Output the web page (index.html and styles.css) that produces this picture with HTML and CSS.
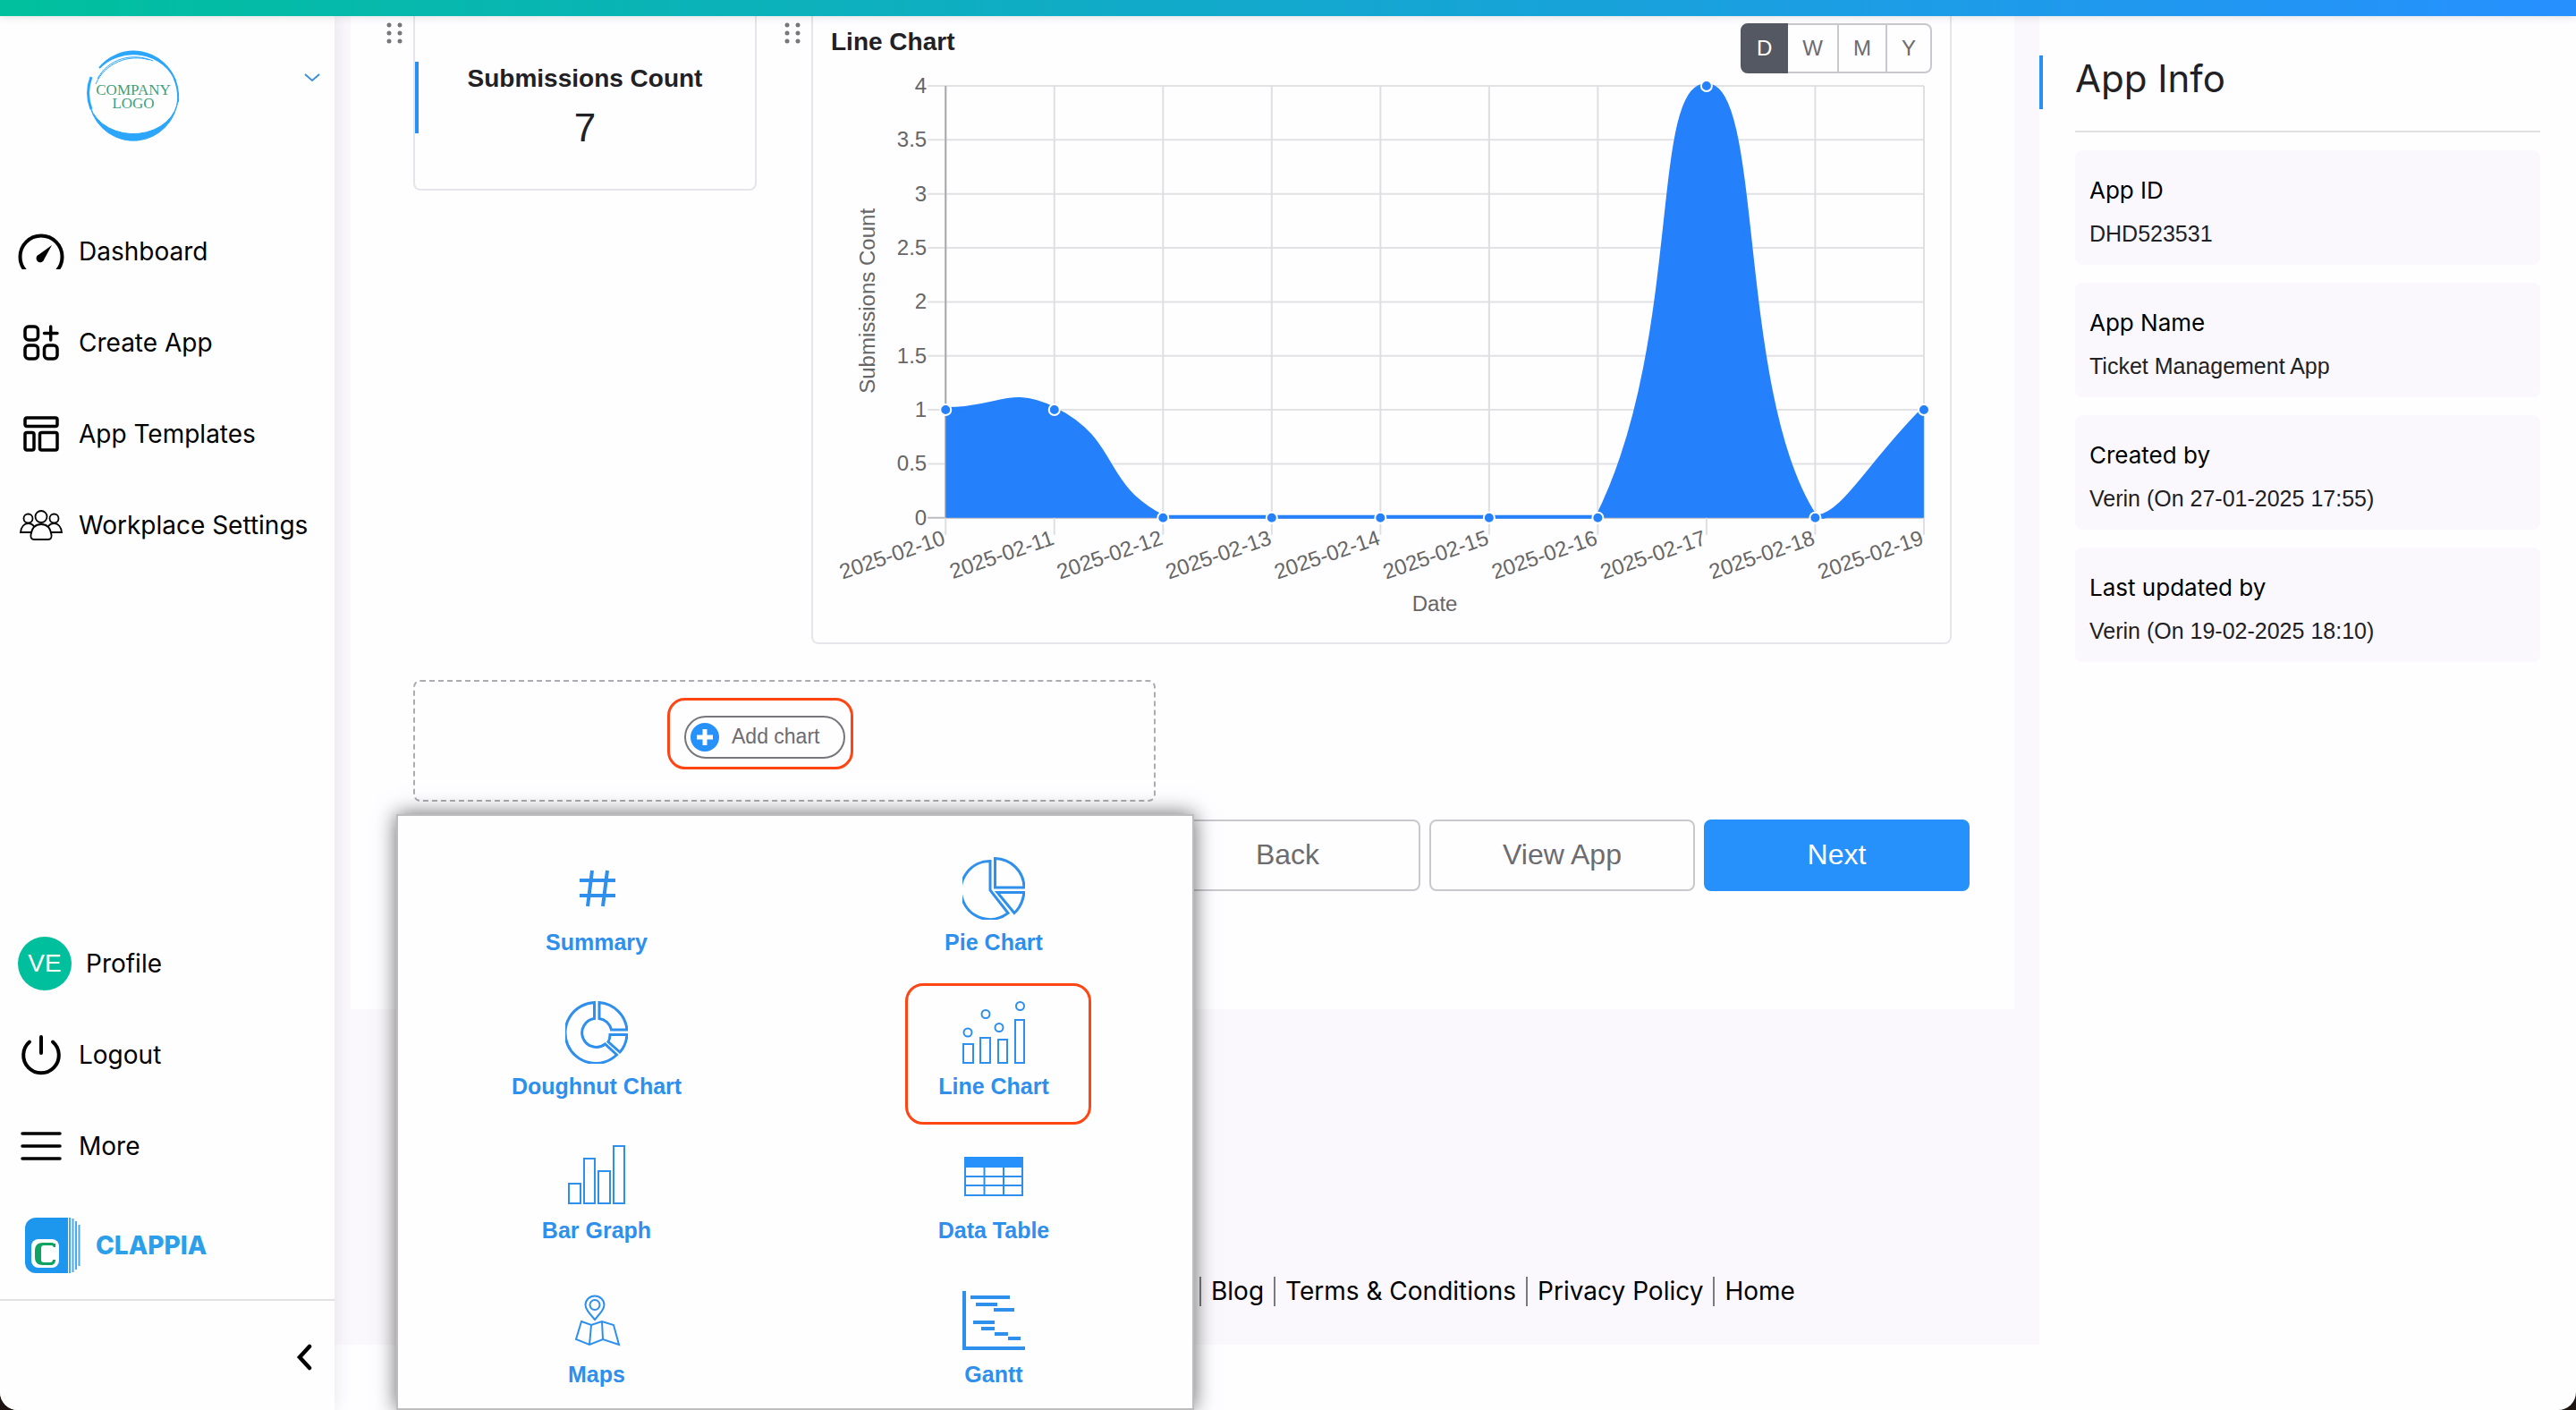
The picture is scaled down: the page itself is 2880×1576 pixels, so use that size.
FILE: index.html
```html
<!DOCTYPE html>
<html lang="en">
<head>
    <meta charset="UTF-8">
    <meta name="viewport" content="width=device-width, initial-scale=1.0">
    <title>Ticket Management App</title>
    <link rel="stylesheet" href="styles.css">
</head>
<body>
<div class="page">
    <header class="topbar"></header>

    <div class="layout">
        <aside class="sidebar">
            <div class="workplace">
                <svg class="company-logo" viewBox="0 0 104 104" fill="none" stroke="#2ba6fb">
                    <path d="M4 66A50 51 0 0 0 102 56A50 41 0 0 1 4 66Z" fill="#2ba6fb" stroke-width="1"/>
                    <path d="M14 22A50 51 0 0 1 99 36A50 45 0 0 0 14 22Z" fill="#2ba6fb" stroke-width="2"/>
                    <path d="M5 32A50 50 0 0 0 5 68" stroke-width="3"/>
                    <path d="M98 34q5 12 4 26" stroke-width="2"/>
                    <path d="M12 34C24 12 50 4 74 14M10 40C20 16 48 6 70 13" stroke-width="1"/>
                    <text class="logo-text" x="52" y="52" text-anchor="middle">COMPANY</text>
                    <text class="logo-text" x="52" y="67" text-anchor="middle">LOGO</text>
                </svg>
                <button class="icon-button" aria-label="Switch workplace">
                    <svg width="18" height="12" viewBox="0 0 18 12" fill="none" stroke="#3d8fd8" stroke-width="2"><path d="M1 2l8 7 8-7"/></svg>
                </button>
            </div>

            <nav class="menu">
                <a class="menu-item" href="#">
                    <span class="menu-icon">
                        <svg width="52" height="40" viewBox="0 0 52 40"><circle cx="26" cy="26" r="23.500" fill="none" stroke="#000" stroke-width="4"/><path d="M38 13L29.500 28.500a4.500 4.500 0 1 1-6-5Z"/></svg>
                    </span>
                    Dashboard
                </a>
                <a class="menu-item" href="#">
                    <span class="menu-icon">
                        <svg width="40" height="40" viewBox="0 0 40 40" fill="none" stroke="#000" stroke-width="3.500"><rect x="2" y="2" width="14.500" height="15" rx="4"/><rect x="2" y="23" width="14.500" height="15" rx="4"/><rect x="23.500" y="23" width="14.500" height="15" rx="4"/><path d="M30.700 2v15M23.500 9.500h14.500" stroke-linecap="round"/></svg>
                    </span>
                    Create App
                </a>
                <a class="menu-item" href="#">
                    <span class="menu-icon">
                        <svg width="40" height="40" viewBox="0 0 40 40" fill="none" stroke="#000" stroke-width="3.500"><rect x="2" y="2" width="36" height="9.500" rx="2"/><rect x="2" y="18.500" width="10" height="19.500" rx="2"/><rect x="18.500" y="18.500" width="19.500" height="19.500" rx="2"/></svg>
                    </span>
                    App Templates
                </a>
                <a class="menu-item" href="#">
                    <span class="menu-icon">
                        <svg width="48" height="34" viewBox="0 0 48 34" fill="none" stroke="#000" stroke-width="1.800"><circle cx="24" cy="7.500" r="6.500"/><circle cx="9.500" cy="9.500" r="5"/><circle cx="38.500" cy="9.500" r="5"/><path d="M16 33c-2.500 0-4-2-3.500-5 1-8 5.500-12 11.500-12s10.500 4 11.500 12c.5 3-1 5-3.500 5ZM12.500 25H1c.5-6 4-10 8.500-10 2.500 0 5 1 6.500 3.500M35.500 25H47c-.5-6-4-10-8.500-10-2.500 0-5 1-6.500 3.500"/></svg>
                    </span>
                    Workplace Settings
                </a>
            </nav>

            <nav class="menu menu-bottom">
                <a class="menu-item" href="#"><span class="avatar">VE</span>Profile</a>
                <a class="menu-item" href="#">
                    <span class="menu-icon">
                        <svg width="46" height="46" viewBox="0 0 46 46" fill="none" stroke="#000" stroke-width="4" stroke-linecap="round"><path d="M23 3v18M10 8.500a19.800 19.800 0 1 0 26 0"/></svg>
                    </span>
                    Logout
                </a>
                <a class="menu-item" href="#">
                    <span class="menu-icon">
                        <svg width="46" height="34" viewBox="0 0 46 34" stroke="#000" stroke-width="3.500" stroke-linecap="round"><path d="M2 3h42M2 17h42M2 31h42"/></svg>
                    </span>
                    More
                </a>
            </nav>

            <a class="brand" href="#">
                <svg width="62" height="62" viewBox="0 0 62 62">
                    <path d="M12 0h36v62H12A12 12 0 0 1 0 50V12A12 12 0 0 1 12 0Z" fill="#1d97ee"/>
                    <path d="M50 0v62M53.500 1v60M57 4v54M60.500 8v46" stroke="#4aaaf0" stroke-width="2"/>
                    <rect x="7" y="24" width="31" height="32" rx="8" fill="#fff"/>
                    <path d="M34 33v-4h-2l-1-1H20c-6 0-9 3-9 9v7c0 6 3 9 9 9h8c4 0 6-2 6-6h-3c0 2-1 3-3 3h-7c-2 0-3-1-3-3V34c0-2 1-3 3-3h7c2 0 3 0 4 2Z" fill="#0da363"/>
                </svg>
                <span>CLAPPIA</span>
            </a>

            <div class="sidebar-footer">
                <button class="icon-button" aria-label="Collapse menu">
                    <svg width="18" height="30" viewBox="0 0 18 30" fill="none" stroke="#000" stroke-width="4.500" stroke-linecap="round"><path d="M15 3L4 15l11 12"/></svg>
                </button>
            </div>
        </aside>

        <main class="main">
            <div class="content">
                <section class="panel">
                    <div class="widgets">
                        <div class="widget widget-small">
                            <svg class="drag" viewBox="0 0 18 26"><use href="#dots"/></svg>
                            <div class="card summary">
                                <div class="summary-bar"></div>
                                <div class="summary-text">
                                    <h2 class="card-title">Submissions Count</h2>
                                    <p class="summary-value">7</p>
                                </div>
                            </div>
                        </div>
                        <div class="widget widget-large">
                            <svg class="drag" viewBox="0 0 18 26"><g id="dots" fill="#77777b"><circle cx="3" cy="4" r="2.500"/><circle cx="15" cy="4" r="2.500"/><circle cx="3" cy="13" r="2.500"/><circle cx="15" cy="13" r="2.500"/><circle cx="3" cy="22" r="2.500"/><circle cx="15" cy="22" r="2.500"/></g></svg>
                            <div class="card">
                                <div class="card-head">
                                    <h2 class="card-title">Line Chart</h2>
                                    <div class="periods">
                                        <button class="period active">D</button>
                                        <button class="period">W</button>
                                        <button class="period">M</button>
                                        <button class="period">Y</button>
                                    </div>
                                </div>
                                <svg class="chart" id="chart" viewBox="0 0 1269 633"></svg>
                            </div>
                        </div>
                    </div>

                    <div class="add-area">
                        <div class="add-wrap">
                            <button class="add-button">
                                <svg width="32" height="32" viewBox="0 0 32 32"><circle cx="16" cy="16" r="16" fill="#2690fb"/><path d="M16 7v18M7 16h18" stroke="#fff" stroke-width="5"/></svg>
                                Add chart
                            </button>
                            <span class="callout callout-add"></span>
                        </div>

                        <div class="chart-menu">
                            <button class="chart-type">
                                <svg class="type-icon bold" viewBox="0 0 70 70"><path d="M16 26h40M16 43h40M30 15l-5 40M47 15l-5 40"/></svg>
                                Summary
                            </button>
                            <button class="chart-type">
                                <svg class="type-icon" viewBox="0 0 70 70"><path d="M36.500 1.500A33 33 0 0 1 69 34H36.500ZM31 4.500a32.500 32.500 0 1 0 20 58L31 37ZM39 39.500h30q-2 15-11 23Z"/></svg>
                                Pie Chart
                            </button>
                            <button class="chart-type">
                                <svg class="type-icon" viewBox="0 0 70 70"><path d="M32.500 1.500v18A16 16 0 1 0 44.500 48L57.500 60A34 34 0 1 1 32.500 1.500ZM38 1.500A34 34 0 0 1 69 32H51.500A16 16 0 0 0 38 19.500ZM50 37.500h19q-1 12-8 19.500L48 45.500q2-3 2-8Z"/></svg>
                                Doughnut Chart
                            </button>
                            <button class="chart-type">
                                <svg class="type-icon thin" viewBox="0 0 70 70"><path d="M1 48h11v21H1ZM20 41h11v28H20ZM40 43h10v26H40ZM59 21h10v48H59Z"/><circle cx="6" cy="35" r="4.500"/><circle cx="26" cy="14.500" r="4.500"/><circle cx="41" cy="29.500" r="4.500"/><circle cx="64.500" cy="5.500" r="4.500"/></svg>
                                Line Chart
                                <span class="callout callout-line"></span>
                            </button>
                            <button class="chart-type">
                                <svg class="type-icon thin" viewBox="0 0 70 70"><path d="M4 43h13v22H4ZM21 15h12v50H21ZM37 29h13v36H37ZM54 1h12v64H54Z"/></svg>
                                Bar Graph
                            </button>
                            <button class="chart-type">
                                <svg class="type-icon thin" viewBox="0 0 70 70"><path d="M2 13h66v12H2Z" fill="#2690fb" stroke="none"/><path d="M3 14v42h64V14M3 35h64M3 45h64M24.500 25v31M46 25v31"/></svg>
                                Data Table
                            </button>
                            <button class="chart-type">
                                <svg class="type-icon thin" viewBox="0 0 70 70"><path d="M33 34C26 26 22.500 22 22.500 17.500a10.500 10 0 0 1 21 0C43.500 22 40 26 33 34Z"/><circle cx="33" cy="17.500" r="5.500"/><path d="M18 36l11 4 12-4 13 4 6 22-18-6-15 6-15-6ZM29 40l-2 22M41 36l1 20"/></svg>
                                Maps
                            </button>
                            <button class="chart-type">
                                <svg class="type-icon bold" viewBox="0 0 70 70"><path d="M2 2v64h68M9 9h44M15 17h24M35 23h23M12 37h24M21 44h15M36 50h15M51 55h14"/></svg>
                                Gantt
                            </button>
                        </div>
                    </div>

                    <div class="actions">
                        <button class="btn">Back</button>
                        <button class="btn">View App</button>
                        <button class="btn btn-primary">Next</button>
                    </div>
                </section>

                <footer class="footer">
                    <a href="#">Blog</a>
                    <a href="#">Terms &amp; Conditions</a>
                    <a href="#">Privacy Policy</a>
                    <a href="#">Home</a>
                </footer>
            </div>
        </main>

        <aside class="info">
            <h1 class="info-title">App Info</h1>
            <dl class="info-list">
                <div class="info-card"><dt>App ID</dt><dd>DHD523531</dd></div>
                <div class="info-card"><dt>App Name</dt><dd>Ticket Management App</dd></div>
                <div class="info-card"><dt>Created by</dt><dd>Verin (On 27-01-2025 17:55)</dd></div>
                <div class="info-card"><dt>Last updated by</dt><dd>Verin (On 19-02-2025 18:10)</dd></div>
            </dl>
        </aside>
    </div>
</div>
<script src="script.js"></script>
</body>
</html>
```

FILE: styles.css
```css
* {
    box-sizing: border-box;
}

body {
    margin: 0;
    background-color: #1e1411;
    font-family: "Liberation Sans", Arial, sans-serif;
    color: #212125;
}

h1, h2, p, dl, dd {
    margin: 0;
}

a {
    color: #000;
    text-decoration: none;
}

button {
    font-family: inherit;
    cursor: pointer;
}

svg {
    display: block;
}

.page {
    display: flex;
    flex-direction: column;
    height: 100vh;
    background-color: #fefdff;
    border-radius: 0 0 20px 20px;
    overflow: hidden;
}

.topbar {
    flex: none;
    height: 18px;
    background: linear-gradient(to right, #00c09d, #2690ff);
    box-shadow: 0 2px 10px rgba(0, 0, 0, 0.1);
    z-index: 5;
}

.layout {
    display: flex;
    flex: 1;
    min-height: 0;
}

/* Sidebar */
.sidebar {
    display: flex;
    flex-direction: column;
    flex: none;
    width: 374px;
    background-color: #fefefe;
    box-shadow: 0 0 20px rgba(0, 0, 0, 0.1);
    font-family: Inter, sans-serif;
    font-size: 28px;
    z-index: 2;
}

.workplace {
    display: flex;
    justify-content: space-between;
    padding: 36px 16px 72px 97px;
}

.company-logo {
    width: 104px;
    height: 104px;
}

.logo-text {
    font-family: "Liberation Serif", serif;
    font-size: 17px;
    fill: #3f9f7c;
    stroke: none;
}

.icon-button {
    padding: 0;
    border: none;
    background: none;
}

.workplace .icon-button {
    align-self: flex-start;
    margin-top: 27px;
}

.menu-item {
    display: flex;
    align-items: center;
    gap: 16px;
    height: 102px;
    padding-left: 20px;
}

.menu-icon {
    display: flex;
    justify-content: center;
    width: 52px;
}

.menu-bottom {
    margin-top: auto;
}

.avatar {
    width: 60px;
    height: 60px;
    border-radius: 50%;
    background-color: #00bf9c;
    color: #fff;
    font-family: "Liberation Sans", Arial, sans-serif;
    line-height: 60px;
    text-align: center;
}

.brand {
    display: flex;
    align-items: center;
    gap: 17px;
    height: 120px;
    padding-left: 28px;
    color: #2c9fea;
    font-weight: 800;
}

.sidebar-footer {
    display: flex;
    align-items: center;
    justify-content: flex-end;
    height: 124px;
    padding: 4px 25px 0 0;
    border-top: 2px solid #e2e2e2;
}

/* Main column */
.main {
    flex: 1;
    min-width: 0;
}

.content {
    padding: 0 28px 0 18px;
    background-color: #faf8fc;
}

.panel {
    padding-bottom: 132px;
    background-color: #fefdff;
}

.widgets {
    display: flex;
    align-items: flex-start;
    gap: 29px;
    padding: 0 70px 0 38px;
}

.widget {
    display: flex;
}

.widget-small {
    flex: none;
    width: 416px;
}

.widget-large {
    flex: 1;
}

.drag {
    flex: none;
    width: 18px;
    height: 26px;
    margin: 6px 12px 0 2px;
}

.card {
    flex: 1;
    border: 2px solid #e6e5e9;
    border-top: none;
    border-radius: 0 0 8px 8px;
}

.card-title {
    font-size: 28px;
    line-height: 34px;
}

.summary {
    display: flex;
    height: 195px;
}

.summary-bar {
    width: 4px;
    height: 80px;
    margin-top: 51px;
    background-color: #2690f5;
}

.summary-text {
    flex: 1;
    padding: 53px 4px 0 0;
    text-align: center;
}

.summary-value {
    font-size: 44px;
    line-height: 76px;
}

.card-head {
    display: flex;
    justify-content: space-between;
    align-items: flex-start;
    padding: 8px 20px 2px;
}

.card-head .card-title {
    margin-top: 4px;
}

.periods {
    display: flex;
}

.period {
    height: 56px;
    padding: 0 16px;
    border: 2px solid #c9c9cd;
    border-left-width: 0;
    background-color: #fefdff;
    color: #6c6c70;
    font-size: 24px;
}

.period:last-child {
    border-radius: 0 8px 8px 0;
}

.period.active {
    border-color: #545862;
    border-left-width: 2px;
    border-radius: 8px 0 0 8px;
    background-color: #545862;
    color: #fff;
}

.chart {
    width: 100%;
    overflow: visible;
}

.chart text {
    font-size: 24px;
    fill: #666;
}

/* Add chart */
.add-area {
    position: relative;
    width: 830px;
    height: 136px;
    margin: 40px 0 20px 70px;
    padding: 38px 0 0 301px;
    border: 2px dashed #adadb1;
    border-radius: 8px;
}

.add-wrap {
    position: relative;
    width: 180px;
}

.add-button {
    display: flex;
    align-items: center;
    gap: 14px;
    width: 100%;
    height: 48px;
    padding: 0 5px;
    border: 2px solid #77777b;
    border-radius: 24px;
    background-color: #fefdff;
    color: #6c6c70;
    font-size: 23px;
    white-space: nowrap;
}

.callout {
    position: absolute;
    border: 3px solid #ff4514;
    border-radius: 20px;
    pointer-events: none;
}

.callout-add {
    inset: -20px -9px -12px -19px;
}

.callout-line {
    width: 208px;
    height: 158px;
    top: -20px;
    left: 123px;
}

.chart-menu {
    position: absolute;
    top: 148px;
    left: -21px;
    display: grid;
    grid-template-columns: 1fr 1fr;
    width: 892px;
    padding-top: 46px;
    border: 2px solid #bdbdc0;
    background-color: #fefefe;
    box-shadow: 0 0 22px rgba(0, 0, 0, 0.6);
    z-index: 1;
}

.chart-type {
    position: relative;
    display: flex;
    flex-direction: column;
    align-items: center;
    gap: 10px;
    height: 161px;
    padding: 0;
    border: none;
    background: none;
    color: #2e8fec;
    font-size: 25px;
    font-weight: bold;
    line-height: 30px;
}

.chart-type:nth-last-child(-n+2) {
    height: 133px;
}

.type-icon {
    width: 70px;
    height: 70px;
    fill: none;
    stroke: #2e8fec;
    stroke-width: 3px;
}

.type-icon.thin {
    stroke-width: 2px;
}

.type-icon.bold {
    stroke-width: 4px;
}

.actions {
    display: flex;
    justify-content: flex-end;
    gap: 10px;
    padding-right: 50px;
}

.btn {
    width: 297px;
    height: 80px;
    border: 2px solid #c9c9cd;
    border-radius: 8px;
    background-color: #fefdff;
    color: #6c6c70;
    font-size: 32px;
}

.btn-primary {
    border-color: #2690fb;
    background-color: #2690fb;
    color: #fff;
}

.footer {
    display: flex;
    align-items: center;
    height: 375px;
    padding: 256px 0 0 calc(50% + 19px);
    font-family: Inter, sans-serif;
    font-size: 28px;
    line-height: 33px;
    white-space: nowrap;
}

.footer a {
    padding: 0 11px;
    border-left: 2px solid #7b7b7f;
}

/* App info */
.info {
    flex: none;
    width: 600px;
    padding: 44px 40px 0 0;
}

.info-title {
    padding: 0 0 8px 36px;
    border-left: 4px solid #2690f5;
    font-family: Inter, sans-serif;
    font-size: 42px;
    font-weight: 400;
    line-height: 52px;
}

.info-list {
    display: flex;
    flex-direction: column;
    gap: 20px;
    margin: 24px 0 0 40px;
    padding-top: 20px;
    border-top: 2px solid #e0e0e2;
}

.info-card {
    height: 128px;
    padding: 21px 16px 0;
    border-radius: 8px;
    background-color: #faf8fc;
    font-size: 25px;
    line-height: 48px;
}

.info-card dt {
    color: #000;
    font-family: Inter, sans-serif;
    font-size: 26px;
}
```

FILE: script.js
```js
const points = [
    { date: '2025-02-10', count: 1 },
    { date: '2025-02-11', count: 1 },
    { date: '2025-02-12', count: 0 },
    { date: '2025-02-13', count: 0 },
    { date: '2025-02-14', count: 0 },
    { date: '2025-02-15', count: 0 },
    { date: '2025-02-16', count: 0 },
    { date: '2025-02-17', count: 4 },
    { date: '2025-02-18', count: 0 },
    { date: '2025-02-19', count: 1 }
];

// Plot area inside the svg
const area = { left: 148, right: 1240, top: 12, bottom: 494 };
const tension = 0.5;

function drawChart() {
    const step = (area.right - area.left) / (points.length - 1);
    const pts = points.map((p, i) => ({
        x: area.left + i * step,
        y: area.bottom - p.count / 4 * (area.bottom - area.top)
    }));
    let svg = '';

    // Horizontal grid and y labels
    for (let v = 0; v <= 4; v += 0.5) {
        const y = area.bottom - v / 4 * (area.bottom - area.top);
        svg += `<line x1="${area.left - 20}" x2="${area.right}" y1="${y}" y2="${y}" stroke="${v === 0 ? '#bbb' : '#e2e2e5'}" stroke-width="2"/>`;
        svg += `<text x="${area.left - 21}" y="${y + 8}" text-anchor="end">${v}</text>`;
    }

    // Vertical grid and dates
    pts.forEach((p, i) => {
        svg += `<line x1="${p.x}" x2="${p.x}" y1="${area.top}" y2="${area.bottom + 19}" stroke="#dfdfe2" stroke-width="2"/>`;
        svg += `<text transform="translate(${p.x + 1} ${area.bottom + 29}) rotate(-19)" text-anchor="end">${points[i].date}</text>`;
    });
    svg += `<line x1="${area.left}" x2="${area.left}" y1="${area.top}" y2="${area.bottom}" stroke="#aaa" stroke-width="2"/>`;

    // Smooth curve, control points are kept inside the plot area
    const clamp = y => Math.min(area.bottom, Math.max(area.top, y));
    const controls = pts.map((p, i) => {
        const prev = pts[i - 1] || p;
        const next = pts[i + 1] || p;
        const d01 = Math.hypot(p.x - prev.x, p.y - prev.y);
        const d12 = Math.hypot(next.x - p.x, next.y - p.y);
        const a = tension * d01 / (d01 + d12);
        const b = tension * d12 / (d01 + d12);
        return {
            before: [p.x - a * (next.x - prev.x), clamp(p.y - a * (next.y - prev.y))],
            after: [p.x + b * (next.x - prev.x), clamp(p.y + b * (next.y - prev.y))]
        };
    });

    let line = `M${pts[0].x} ${pts[0].y}`;
    for (let i = 1; i < pts.length; i++) {
        line += `C${controls[i - 1].after} ${controls[i].before} ${pts[i].x} ${pts[i].y}`;
    }
    svg += `<clipPath id="plot"><rect x="${area.left}" y="${area.top - 2}" width="${area.right - area.left}" height="${area.bottom - area.top + 3}"/></clipPath>`;
    svg += `<g clip-path="url(#plot)"><path d="${line}V${area.bottom}H${area.left}Z" fill="#2480fb"/>`;
    svg += `<path d="${line}" fill="none" stroke="#2480fb" stroke-width="6"/></g>`;
    pts.forEach(p => {
        svg += `<circle cx="${p.x}" cy="${p.y}" r="6" fill="#2480fb" stroke="#fff" stroke-width="2"/>`;
    });

    // Axis titles
    svg += `<text x="694" y="598" text-anchor="middle">Date</text>`;
    svg += `<text transform="translate(69 252) rotate(-90)" text-anchor="middle">Submissions Count</text>`;

    document.getElementById('chart').innerHTML = svg;
}

drawChart();
```
